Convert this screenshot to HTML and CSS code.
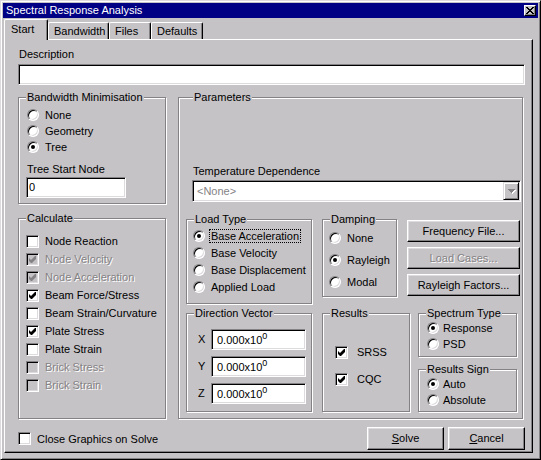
FILE: index.html
```html
<!DOCTYPE html>
<html lang="en">
<head>
    <meta charset="UTF-8">
    <title>Spectral Response Analysis</title>
    <link rel="stylesheet" href="styles.css">
</head>
<body>
    <div class="window">
        <div class="title-bar">
            <span class="title-text">Spectral Response Analysis</span>
            <span class="close-btn">
                <svg width="8" height="7" viewBox="0 0 8 7" shape-rendering="crispEdges"><path d="M0 0h2v1H0zM6 0h2v1H6zM1 1h2v1H1zM5 1h2v1H5zM2 2h4v1H2zM3 3h2v1H3zM2 4h4v1H2zM1 5h2v1H1zM5 5h2v1H5zM0 6h2v1H0zM6 6h2v1H6z"/></svg>
            </span>
        </div>

        <ul class="tabs">
            <li class="tab tab-start active">Start</li>
            <li class="tab tab-bandwidth">Bandwidth</li>
            <li class="tab tab-files">Files</li>
            <li class="tab tab-defaults">Defaults</li>
        </ul>

        <div class="panel">
            <div class="field-label desc-label">Description</div>
            <div class="edit desc-edit"></div>

            <div class="main-row">
                <div class="left-col">
                    <!-- bandwidth -->
                    <div class="group bw-group">
                        <span class="group-title">Bandwidth Minimisation</span>
                        <div class="bw-list">
                            <div class="opt"><span class="radio"></span><span class="opt-text">None</span></div>
                            <div class="opt"><span class="radio"></span><span class="opt-text">Geometry</span></div>
                            <div class="opt"><span class="radio on"></span><span class="opt-text">Tree</span></div>
                        </div>
                        <div class="field-label tree-label">Tree Start Node</div>
                        <div class="edit tree-edit">0</div>
                    </div>

                    <!-- calculate -->
                    <div class="group calc-group">
                        <span class="group-title">Calculate</span>
                        <div class="calc-list">
                            <div class="opt"><span class="check"></span><span class="opt-text">Node Reaction</span></div>
                            <div class="opt disabled"><span class="check"><svg viewBox="0 0 7 7"><path d="M0 2L2 4L6 0H7V3L3 7H2L0 5Z"/></svg></span><span class="opt-text">Node Velocity</span></div>
                            <div class="opt disabled"><span class="check"><svg viewBox="0 0 7 7"><path d="M0 2L2 4L6 0H7V3L3 7H2L0 5Z"/></svg></span><span class="opt-text">Node Acceleration</span></div>
                            <div class="opt"><span class="check"><svg viewBox="0 0 7 7"><path d="M0 2L2 4L6 0H7V3L3 7H2L0 5Z"/></svg></span><span class="opt-text">Beam Force/Stress</span></div>
                            <div class="opt"><span class="check"></span><span class="opt-text">Beam Strain/Curvature</span></div>
                            <div class="opt"><span class="check"><svg viewBox="0 0 7 7"><path d="M0 2L2 4L6 0H7V3L3 7H2L0 5Z"/></svg></span><span class="opt-text">Plate Stress</span></div>
                            <div class="opt"><span class="check"></span><span class="opt-text">Plate Strain</span></div>
                            <div class="opt disabled"><span class="check"></span><span class="opt-text">Brick Stress</span></div>
                            <div class="opt disabled"><span class="check"></span><span class="opt-text">Brick Strain</span></div>
                        </div>
                    </div>
                </div>

                <!-- parameters -->
                <div class="group params">
                    <span class="group-title">Parameters</span>
                    <div class="field-label temp-label">Temperature Dependence</div>
                    <div class="edit combo">
                        <span class="combo-text">&lt;None&gt;</span>
                        <span class="combo-btn">
                            <svg width="8" height="5" viewBox="0 0 8 5" shape-rendering="crispEdges">
                                <path fill="#fff" d="M1 1h7v1h-1v1h-1v1h-1v1h-1v-1h-1v-1h-1v-1h-1z"/>
                                <path fill="#848284" d="M0 0h7v1h-1v1h-1v1h-1v1h-1v-1h-1v-1h-1v-1h-1z"/>
                            </svg>
                        </span>
                    </div>

                    <div class="param-row row-a">
                        <div class="group load-group">
                            <span class="group-title">Load Type</span>
                            <div class="load-list">
                                <div class="opt"><span class="radio on"></span><span class="opt-text focus">Base Acceleration</span></div>
                                <div class="opt"><span class="radio"></span><span class="opt-text">Base Velocity</span></div>
                                <div class="opt"><span class="radio"></span><span class="opt-text">Base Displacement</span></div>
                                <div class="opt"><span class="radio"></span><span class="opt-text">Applied Load</span></div>
                            </div>
                        </div>
                        <div class="group damp-group">
                            <span class="group-title">Damping</span>
                            <div class="damp-list">
                                <div class="opt"><span class="radio"></span><span class="opt-text">None</span></div>
                                <div class="opt"><span class="radio on"></span><span class="opt-text">Rayleigh</span></div>
                                <div class="opt"><span class="radio"></span><span class="opt-text">Modal</span></div>
                            </div>
                        </div>
                        <div class="btn-col">
                            <div class="btn">Frequency File...</div>
                            <div class="btn disabled">Load Cases...</div>
                            <div class="btn">Rayleigh Factors...</div>
                        </div>
                    </div>

                    <div class="param-row row-b">
                        <div class="group dir-group">
                            <span class="group-title">Direction Vector</span>
                            <div class="dir-list">
                                <div class="vec-row"><span class="vec-label">X</span><div class="edit vec-edit">0.000x10<sup>0</sup></div></div>
                                <div class="vec-row"><span class="vec-label">Y</span><div class="edit vec-edit">0.000x10<sup>0</sup></div></div>
                                <div class="vec-row"><span class="vec-label">Z</span><div class="edit vec-edit">0.000x10<sup>0</sup></div></div>
                            </div>
                        </div>
                        <div class="group res-group">
                            <span class="group-title">Results</span>
                            <div class="res-list">
                                <div class="opt"><span class="check"><svg viewBox="0 0 7 7"><path d="M0 2L2 4L6 0H7V3L3 7H2L0 5Z"/></svg></span><span class="opt-text">SRSS</span></div>
                                <div class="opt"><span class="check"><svg viewBox="0 0 7 7"><path d="M0 2L2 4L6 0H7V3L3 7H2L0 5Z"/></svg></span><span class="opt-text">CQC</span></div>
                            </div>
                        </div>
                        <div class="right-col">
                            <div class="group spec-group">
                                <span class="group-title">Spectrum Type</span>
                                <div class="small-list">
                                    <div class="opt"><span class="radio on"></span><span class="opt-text">Response</span></div>
                                    <div class="opt"><span class="radio"></span><span class="opt-text">PSD</span></div>
                                </div>
                            </div>
                            <div class="group sign-group">
                                <span class="group-title">Results Sign</span>
                                <div class="small-list">
                                    <div class="opt"><span class="radio on"></span><span class="opt-text">Auto</span></div>
                                    <div class="opt"><span class="radio"></span><span class="opt-text">Absolute</span></div>
                                </div>
                            </div>
                        </div>
                    </div>
                </div>
            </div>

            <div class="bottom-row">
                <div class="opt"><span class="check"></span><span class="opt-text">Close Graphics on Solve</span></div>
                <div class="btn solve-btn"><u>S</u>olve</div>
                <div class="btn cancel-btn"><u>C</u>ancel</div>
            </div>
        </div>
    </div>
</body>
</html>
```

FILE: styles.css
```css
* {
    margin: 0;
    padding: 0;
    box-sizing: border-box;
}
ul {
    list-style: none;
}
body {
    font: 11px/13px "Liberation Sans", Arial, sans-serif;
    color: #000;
    background: #c6c3c6;
}

/* window frame */
.window {
    width: 541px;
    height: 460px;
    padding: 2px;
    background: #c6c3c6;
    border: 1px solid;
    border-color: #dedbde #000 #000 #dedbde;
    box-shadow: inset 1px 1px #fff, inset -1px -1px #848284;
}
.title-bar {
    display: flex;
    align-items: flex-start;
    height: 15px;
    padding-left: 3px;
    color: #fff;
    background: #000084;
}
.title-text {
    line-height: 15px;
}
.close-btn {
    display: flex;
    align-items: center;
    justify-content: center;
    width: 12px;
    height: 11px;
    margin: 2px 2px 0 auto;
    background: #c6c3c6;
    border: 1px solid;
    border-color: #fff #000 #000 #fff;
    box-shadow: inset -1px -1px #848284;
}
.close-btn svg {
    display: block;
}

/* tabs */
.tabs {
    display: flex;
    align-items: flex-end;
    height: 20px;
    margin: 1px 0 0 1px;
}
.tab {
    height: 17px;
    padding: 1px 0 0 5px;
    line-height: 15px;
    border: 1px solid;
    border-bottom: 0;
    border-color: #fff #000 #000 #fff;
    border-radius: 2px 2px 0 0;
    box-shadow: inset -1px 0 #848284;
}
.tab.active {
    position: relative;
    z-index: 1;
    height: 21px;
    margin-bottom: -1px;
    padding: 2px 0 0 6px;
    background: #c6c3c6;
}
.tab-start { width: 44px; }
.tab-bandwidth { width: 61px; }
.tab-files { width: 42px; }
.tab-defaults { width: 52px; }

.panel {
    width: 529px;
    height: 414px;
    margin-left: 1px;
    padding: 8px 0 0 13px;
    border: 1px solid;
    border-color: #fff #000 #000 #fff;
    box-shadow: inset -1px -1px #848284;
}

/* common controls */
.field-label {
    white-space: nowrap;
}
.edit {
    height: 21px;
    background: #fff;
    border: 1px solid;
    border-color: #848284 #fff #fff #848284;
    box-shadow: inset 1px 1px #000, inset -1px -1px #dedbde;
}
.group {
    border: 1px solid #848284;
    box-shadow: inset 1px 1px #fff, 1px 1px #fff;
}
.group-title {
    display: block;
    width: max-content;
    margin: -7px 0 0 7px;
    padding: 0 1px;
    background: #c6c3c6;
}
.opt {
    display: flex;
    align-items: center;
}
.opt-text {
    margin-left: 4px;
    padding: 0 1px;
    line-height: 12px;
    white-space: nowrap;
    border: 1px solid transparent;
}
.opt-text.focus {
    border: 1px dotted #000;
}
.opt.disabled .opt-text,
.btn.disabled {
    color: #848284;
    text-shadow: 1px 1px #fff;
}
.radio {
    display: flex;
    align-items: center;
    justify-content: center;
    flex: none;
    width: 12px;
    height: 12px;
    background: #fff;
    border: 1px solid;
    border-color: #848284 #fff #fff #848284;
    border-radius: 50%;
    box-shadow: inset 1px 1px #000, inset -1px -1px #dedbde;
}
.radio.on::after {
    content: "";
    width: 4px;
    height: 4px;
    background: #000;
    border-radius: 50%;
}
.check {
    display: flex;
    align-items: center;
    justify-content: center;
    flex: none;
    width: 13px;
    height: 13px;
    background: #fff;
    border: 1px solid;
    border-color: #848284 #fff #fff #848284;
    box-shadow: inset 1px 1px #000, inset -1px -1px #dedbde;
}
.check svg {
    display: block;
    width: 7px;
    height: 7px;
    fill: #000;
}
.opt.disabled .check {
    background: #c6c3c6;
}
.opt.disabled .check svg {
    fill: #848284;
}
.btn {
    display: flex;
    align-items: center;
    justify-content: center;
    height: 22px;
    background: #c6c3c6;
    border: 1px solid;
    border-color: #fff #000 #000 #fff;
    box-shadow: inset -1px -1px #848284, inset 1px 1px #dedbde;
    white-space: nowrap;
}

/* description */
.desc-label {
    margin-left: 1px;
}
.desc-edit {
    width: 507px;
    margin-top: 3px;
}

.main-row {
    display: flex;
    align-items: flex-start;
    margin-top: 12px;
}
.left-col {
    width: 148px;
}

/* bandwidth minimisation */
.bw-group {
    height: 107px;
}
.bw-list {
    padding-top: 3px;
}
.bw-list .opt {
    height: 16px;
    padding-left: 8px;
}
.tree-label {
    margin: 8px 0 0 8px;
}
.tree-edit {
    width: 100px;
    margin: 1px 0 0 7px;
    padding-left: 2px;
    line-height: 19px;
}

/* calculate */
.calc-group {
    height: 201px;
    margin-top: 14px;
}
.calc-list {
    padding-top: 7px;
}
.calc-list .opt {
    height: 18px;
    padding-left: 7px;
}

/* parameters */
.params {
    width: 345px;
    height: 322px;
    margin-left: 12px;
    padding-left: 7px;
}
.temp-label {
    margin: 61px 0 0 7px;
}
.combo {
    display: flex;
    align-items: center;
    width: 329px;
    height: 22px;
    margin: 2px 0 0 6px;
    padding: 1px;
}
.combo-text {
    margin-left: 3px;
    color: #848284;
}
.combo-btn {
    display: flex;
    align-items: center;
    justify-content: center;
    width: 16px;
    height: 18px;
    margin-left: auto;
    padding: 1px 0 0 1px;
    background: #c6c3c6;
    border: 1px solid;
    border-color: #dedbde #000 #000 #dedbde;
    box-shadow: inset 1px 1px #fff, inset -1px -1px #848284;
}
.combo-btn svg {
    display: block;
}

.param-row {
    display: flex;
    align-items: flex-start;
}
.row-a {
    margin-top: 17px;
}
.load-group {
    width: 126px;
    height: 85px;
}
.load-list {
    padding-top: 1px;
}
.load-list .opt {
    height: 17px;
    padding-left: 6px;
}
.damp-group {
    width: 75px;
    height: 78px;
    margin-left: 10px;
}
.damp-list {
    padding-top: 1px;
}
.damp-list .opt {
    height: 22px;
    padding-left: 6px;
}
.btn-col {
    display: flex;
    flex-direction: column;
    gap: 5px;
    width: 113px;
    margin: 1px 0 0 10px;
}

.row-b {
    margin-top: 9px;
}
.dir-group {
    width: 126px;
    height: 99px;
}
.dir-list {
    padding-top: 9px;
}
.vec-row {
    display: flex;
    align-items: center;
    padding-left: 11px;
}
.vec-row + .vec-row {
    margin-top: 6px;
}
.vec-label {
    width: 13px;
}
.vec-edit {
    width: 95px;
    padding: 2px 0 0 5px;
    line-height: 17px;
}
.vec-edit sup {
    font-size: 9px;
    line-height: 0;
    vertical-align: 5px;
}
.res-group {
    width: 88px;
    height: 99px;
    margin-left: 10px;
}
.res-list {
    padding-top: 23px;
}
.res-list .opt {
    height: 18px;
    padding-left: 12px;
}
.res-list .opt + .opt {
    margin-top: 9px;
}
.res-list .opt-text {
    margin-left: 7px;
}
.right-col {
    width: 99px;
    margin-left: 8px;
}
.spec-group {
    height: 44px;
}
.sign-group {
    height: 43px;
    margin-top: 12px;
}
.small-list .opt {
    height: 16px;
    padding-left: 8px;
}
.small-list .opt-text {
    margin-left: 2px;
}

/* bottom */
.bottom-row {
    display: flex;
    align-items: center;
    width: 507px;
    margin-top: 8px;
}
.bottom-row .btn {
    width: 77px;
    height: 23px;
}
.solve-btn {
    margin-left: auto;
}
.cancel-btn {
    margin-left: 4px;
}
```
